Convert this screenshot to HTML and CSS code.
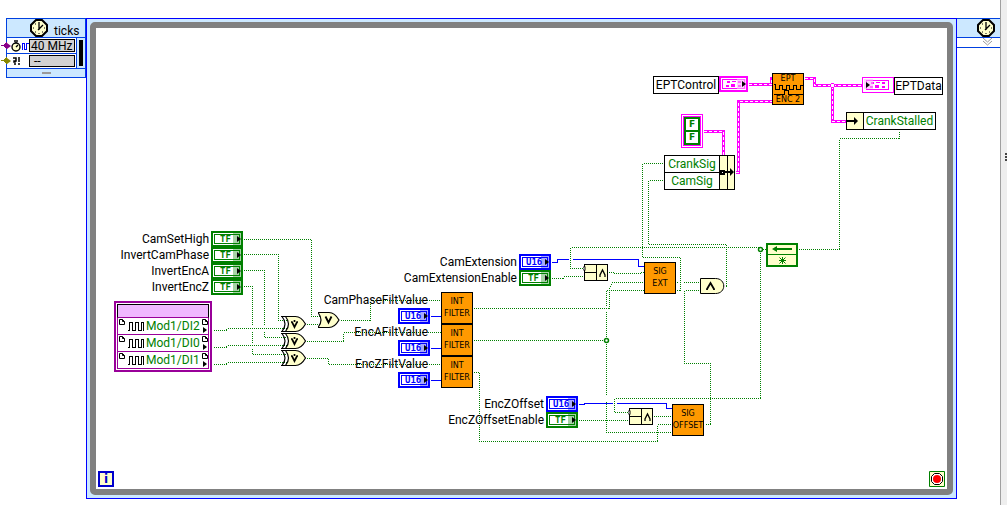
FILE: index.html
```html
<!DOCTYPE html>
<html lang="en">
<head>
<meta charset="utf-8">
<title>Block Diagram</title>
<link rel="stylesheet" href="styles.css">
</head>
<body>
<svg class="defs" width="0" height="0" aria-hidden="true">
  <defs>
    <symbol id="clock" viewBox="0 0 18 18">
      <path d="M6 1h6l5 5v6l-5 5H6l-5-5V6z" fill="#ffffcc" stroke="#000" stroke-width="2"/>
      <path d="M9 3v8M8 11l5-5" fill="none" stroke="#000" stroke-width="1.3"/>
      <path d="M3 9h1M14 9h1M9 14v1M5 5h1M5 13h1M12 13h1" fill="none" stroke="#000"/>
    </symbol>
    <symbol id="pulses" viewBox="0 0 17 9">
      <path transform="translate(.5 .5)" d="M0 8h2V0h3v8h3V0h3v8h3V0h2v8" fill="none" stroke="#000" shape-rendering="crispEdges"/>
    </symbol>
    <symbol id="page" viewBox="0 0 6 6">
      <path transform="translate(.5 .5)" d="M0 0h3l2 2v3H0zM3 0v2h2" fill="#fff" stroke="#000"/>
    </symbol>
    <symbol id="xor" viewBox="0 0 26 18">
      <path d="M4.500 1.500h10c5 0 8 4 10 7.500-2 3.500-5 7.500-10 7.500h-10c4-5 4-10 0-15z" fill="#ffffcc" stroke="#000" stroke-width="1.2"/>
      <path d="M0 1.500h5M0 16.500h5M1 1.500c4 5 4 10 0 15" fill="none" stroke="#000" stroke-width="1.2"/>
      <path d="M10 7l1 0 2.500 5 2.500-5 1 0M13.500 5v2" fill="none" stroke="#000" stroke-width="1.700"/>
    </symbol>
    <symbol id="or" viewBox="0 0 24 18">
      <path d="M0 1.500h11c5 0 8 4 10 7.500-2 3.500-5 7.500-10 7.500H0c4-5 4-10 0-15z" fill="#ffffcc" stroke="#000" stroke-width="1.2"/>
      <path d="M7.500 5.500l3 6 3-6" fill="none" stroke="#000" stroke-width="1.800"/>
    </symbol>
    <symbol id="compound" viewBox="0 0 26 18">
      <path transform="translate(.5 .5)" d="M1 0h23v16H1zM13 0v16M1 8h12" fill="#ffffcc" stroke="#000" shape-rendering="crispEdges"/>
      <path d="M17 13V11l2.500-5 2.500 5v2" fill="none" stroke="#000" stroke-width="1.300"/>
      <path d="M2 2.500c-3 0-3 4 0 4z" fill="#fff" stroke="#000"/>
    </symbol>
    <symbol id="cluster" viewBox="0 0 24 10">
      <path transform="translate(.5 .5)" d="M0 0h22v9H0z" fill="#fff" stroke="#f0f" shape-rendering="crispEdges"/>
      <path d="M5 2h3v2H5zM10 2h4v1h-4zM4 6h3v2H4zM9 5h4v3H9zM16 2h3v2h-3zM16 6h3v2h-3z" fill="#f0f" shape-rendering="crispEdges"/>
    </symbol>
  </defs>
</svg>

<main class="diagram">
  <div class="timed-loop">
    <section class="loop-input">
      <header class="node-head"><svg class="clock"><use href="#clock"/></svg><span>ticks</span></header>
      <div class="node-body">
        <div class="node-rows">
          <div class="node-row">
            <svg class="row-icon" viewBox="0 0 22 14">
              <path d="M0 4l4 3-4 3z" fill="#808"/>
              <circle cx="9" cy="8" r="4" fill="#ffffcc" stroke="#000" stroke-width="1.4"/>
              <path d="M7 2h4M9 8l2-2M9 3v1" stroke="#000" stroke-width="1.4"/>
              <path transform="translate(.5 .5)" d="M14 10h1V4h2v6h2V4h2" fill="none" stroke="#00f" shape-rendering="crispEdges"/>
            </svg>
            <span class="field">40 MHz</span>
          </div>
          <div class="node-row">
            <svg class="row-icon" viewBox="0 0 22 14">
              <path d="M0 4l4 3-4 3z" fill="#880"/>
              <path d="M6 4h3v3H7v1h1V7M7 10h2M12 3v5M11 10h2" fill="none" stroke="#000" stroke-width="1.500"/>
            </svg>
            <span class="field">--</span>
          </div>
        </div>
        <div class="priority"></div>
      </div>
      <footer class="grip"></footer>
    </section>

    <section class="loop-frame"><div class="loop-area"></div></section>

    <section class="loop-output">
      <header class="node-head"><svg class="clock"><use href="#clock"/></svg></header>
      <div class="expand"><svg width="11" height="8" viewBox="0 0 11 8"><path d="M1 0l4.500 4 4.500-4M1 3l4.500 4 4.500-4" fill="none" stroke="#999"/></svg></div>
    </section>
  </div>
  <aside class="side-pane"><span class="divider-grip"></span></aside>

  <svg class="wires" width="1000" height="500" aria-hidden="true">
    <g transform="translate(.5 .5)" fill="none" shape-rendering="crispEdges">
      <path d="M0 45h3l3-3v6l-3-3" stroke="#808" fill="#808"/>
      <path d="M0 60h3l3-3v6l-3-3" stroke="#880" fill="#880"/>
      <g class="boolean">
        <path d="M243 239H311V316H321"/>
        <path d="M243 254H278V320H286"/>
        <path d="M243 270H264V325M264 331V337H286"/>
        <path d="M243 286H252V325M252 331V342M252 348V354H286"/>
        <path d="M213 330H226V328H286"/>
        <path d="M213 347H226V345H286"/>
        <path d="M213 364H226V362H286"/>
        <path d="M306 324H320"/>
        <path d="M340 320H370V300H441"/>
        <path d="M306 341H343V332H441"/>
        <path d="M306 358H328V364H441"/>
        <path d="M473 308H609V287L612 282H645"/>
        <path d="M473 340H606M606 290V305M606 311V395M606 401V432H672M606 290H645"/>
        <path d="M473 372H479V441H657V424H672"/>
        <path d="M551 278H563V276H584"/>
        <path d="M582 268H570V247H760V398H614V412H627"/>
        <path d="M608 272H613V273H640V272H645"/>
        <path d="M676 290H680V257H642V163H664"/>
        <path d="M676 282H678M683 282H700"/>
        <path d="M725 286H726V244H648V180H664"/>
        <path d="M700 290H684V363H710V424H704"/>
        <path d="M760 249H766M798 249H839V138H899V130"/>
        <path d="M653 416H672M578 420H629"/>
      </g>
      <g stroke="#0000ff">
        <path d="M430 316H441M430 348H441M430 380H441"/>
        <path d="M551 262H557V259H568M572 259H638V266H645"/>
        <path d="M578 404H584V403H612M616 403H666V408H672"/>
      </g>
      <path class="cluster-edge" d="M748 84H771V78H774M804 78H814V85H862M832 85V121H846M703 131H723V156M735 172H738V101H772"/>
      <path class="cluster-core" d="M748 84H771V78H774M804 78H814V85H862M832 85V121H846M703 131H723V156M735 172H738V101H772"/>
      <circle cx="832" cy="85" r="2" fill="#fff" stroke="#f0f"/>
    </g>
    <g fill="#fff" stroke="#008000" stroke-width="1.5">
      <circle cx="606.5" cy="340.5" r="2"/><circle cx="760.5" cy="249.5" r="2"/>
    </g>
    <use href="#xor" x="281" y="315" width="26" height="18"/>
    <use href="#xor" x="281" y="332" width="26" height="18"/>
    <use href="#xor" x="281" y="349" width="26" height="18"/>
    <use href="#or" x="318" y="311" width="24" height="18"/>
    <use href="#compound" x="583" y="264" width="26" height="18"/>
    <use href="#compound" x="628" y="408" width="26" height="18"/>
    <path d="M700.500 278.500h15c11 0 11 15 0 15h-15z" fill="#ffffcc" stroke="#000"/>
    <path d="M707 290v-1l3.500-6 3.500 6v1" fill="none" stroke="#000" stroke-width="1.8"/>
    <g>
      <path d="M767 244h30v22h-30z" fill="#ffffcc" stroke="#008000" stroke-width="2"/>
      <path d="M767 254.500h30" stroke="#008000"/>
      <path d="M772 249l5-3v2h15v2h-15v2z" fill="#008000"/>
      <path d="M782.500 257v7M779 260.500h7M779.500 257.500l6 6M785.500 257.500l-6 6" stroke="#008000"/>
    </g>
  </svg>

  <div class="controls inputs">
    <div class="control"><span>CamSetHigh</span><b class="terminal bool">TF</b></div>
    <div class="control"><span>InvertCamPhase</span><b class="terminal bool">TF</b></div>
    <div class="control"><span>InvertEncA</span><b class="terminal bool">TF</b></div>
    <div class="control"><span>InvertEncZ</span><b class="terminal bool">TF</b></div>
  </div>

  <div class="io-node">
    <div class="io-head"></div>
    <div class="io-row"><svg class="page"><use href="#page"/></svg><svg class="pulses"><use href="#pulses"/></svg><span>Mod1/DI2</span><svg class="page"><use href="#page"/></svg></div>
    <div class="io-row"><svg class="page"><use href="#page"/></svg><svg class="pulses"><use href="#pulses"/></svg><span>Mod1/DI0</span><svg class="page"><use href="#page"/></svg></div>
    <div class="io-row"><svg class="page"><use href="#page"/></svg><svg class="pulses"><use href="#pulses"/></svg><span>Mod1/DI1</span><svg class="page"><use href="#page"/></svg></div>
  </div>

  <div class="controls filter-values">
    <div class="control stacked"><span>CamPhaseFiltValue</span><b class="terminal word">U16</b></div>
    <div class="control stacked"><span>EncAFiltValue</span><b class="terminal word">U16</b></div>
    <div class="control stacked"><span>EncZFiltValue</span><b class="terminal word">U16</b></div>
  </div>

  <div class="filters">
    <div class="subvi"><span>INT</span><span>FILTER</span></div>
    <div class="subvi"><span>INT</span><span>FILTER</span></div>
    <div class="subvi"><span>INT</span><span>FILTER</span></div>
  </div>

  <div class="controls extension">
    <div class="control"><span>CamExtension</span><b class="terminal word">U16</b></div>
    <div class="control"><span>CamExtensionEnable</span><b class="terminal bool">TF</b></div>
  </div>
  <div class="controls offset">
    <div class="control"><span>EncZOffset</span><b class="terminal word">U16</b></div>
    <div class="control"><span>EncZOffsetEnable</span><b class="terminal bool">TF</b></div>
  </div>

  <div class="subvi sig-ext"><span>SIG</span><span>EXT</span></div>
  <div class="subvi sig-offset"><span>SIG</span><span>OFFSET</span></div>

  <div class="ept-control"><span class="caption">EPTControl</span><span class="cluster-term out"><svg class="cluster"><use href="#cluster"/></svg></span></div>
  <div class="subvi ept"><span>EPT</span>
    <svg class="ept-wave" viewBox="0 0 30 11"><path transform="translate(.5 .5)" d="M0 0h2v5h4V1h3v4h4V1h3v4h4V1h3v4h4V1h3M0 10h11V6h4v4h15" fill="none" stroke="#000" shape-rendering="crispEdges"/></svg>
    <span>ENC 2</span></div>
  <div class="ept-data"><span class="cluster-term in"><svg class="cluster"><use href="#cluster"/></svg></span><span class="caption">EPTData</span></div>

  <div class="constant"><span>F</span><span>F</span></div>
  <div class="bundle">
    <div class="bundle-names"><span>CrankSig</span><span>CamSig</span></div>
    <svg class="bundle-bar" viewBox="0 0 14 33"><path d="M7.500 0v33" stroke="#000"/><path d="M0 14h5v5H0zM5 15h5v-3l4 4-4 4v-3H5z"/><path d="M2 16.500h1" stroke="#fff"/></svg>
  </div>
  <div class="unbundle">
    <svg class="unbundle-bar" viewBox="0 0 16 16"><path d="M0 7h7V4l4 4-4 4V9H0z"/></svg>
    <span>CrankStalled</span>
  </div>

  <div class="iteration">i</div>
  <svg class="stop" viewBox="0 0 16 16"><path d="M.5.500h15v15H.5z" fill="#ffffcc" stroke="#008000"/><path d="M5.500 2.500h5l3 3v5l-3 3h-5l-3-3v-5z" fill="#fff" stroke="#000"/><circle cx="8" cy="8" r="4" fill="red"/></svg>
</main>
</body>
</html>
```
FILE: styles.css
```css
* { box-sizing: border-box; }
body {
  margin: 0;
  background: #fff;
  color: #000;
  font: 12px/16px Roboto, "Noto Sans", sans-serif;
}
svg { display: block; flex: none; }
.defs { position: absolute; }
.diagram { position: relative; display: flex; min-height: 100vh; overflow: hidden; }
.timed-loop { flex: 1; display: flex; align-items: flex-start; padding: 18px 0 6px 6px; }

/* timed loop terminals */
.loop-input, .loop-output { border: 1px solid #0040e0; background: #cce8ff; }
.loop-input { width: 80px; height: 60px; display: flex; flex-direction: column; }
.node-head { display: flex; align-items: center; height: 18px; gap: 6px; padding-left: 23px; }
.node-head span { padding-top: 6px; }
.clock { width: 18px; height: 18px; }
.node-body { display: flex; border: solid #0040e0; border-width: 1px 0; }
.node-rows { flex: 1; background: #fff; border-right: 1px solid #0040e0; }
.node-row { display: flex; align-items: center; height: 15px; }
.node-row + .node-row { border-top: 1px solid #0040e0; }
.row-icon { width: 22px; height: 14px; }
.field {
  flex: 1;
  height: 13px;
  margin-right: 1px;
  padding-left: 1px;
  border: 1px solid #000;
  background: #d2d2d2;
  line-height: 12px;
  white-space: nowrap;
}
.node-row + .node-row .field { height: 12px; padding-left: 4px; line-height: 10px; }
.priority { width: 4px; margin: 2px; background: #000; }
.grip { width: 9px; height: 4px; margin: 3px auto; border: solid #999; border-width: 1px 0; }
.loop-frame {
  flex: 1;
  align-self: stretch;
  padding: 3px;
  border: 1px solid #0000ff;
  background: #cce8ff;
  display: flex;
}
.loop-area { flex: 1; border: 6px solid #808080; border-radius: 5px; background: #fff; }
.loop-output { width: 43px; border-width: 1px 0; }
.loop-output .node-head { padding-left: 20px; border-bottom: 1px solid #0040e0; height: 19px; }
.expand { height: 9px; padding-left: 25px; background: #fff; }
.side-pane {
  width: 7px;
  border-left: 1px solid #a0a0a0;
  background: #eee;
  padding: 153px 0 0 4px;
}
.divider-grip { display: block; height: 8px; border: dotted #444; border-width: 0 0 0 2px; }

/* wires */
.wires { position: absolute; left: 0; top: 0; }
.boolean { stroke: #008000; stroke-dasharray: 1 1; }
.cluster-edge { stroke: #ff00ff; stroke-width: 3; }
.cluster-core { stroke: #fff; stroke-dasharray: 3 2; }

/* front panel terminals */
.controls { position: absolute; width: 150px; }
.control { display: flex; justify-content: flex-end; align-items: center; gap: 2px; height: 16px; white-space: nowrap; }
.control.stacked { flex-direction: column; justify-content: flex-start; align-items: flex-end; gap: 0; height: 32px; }
.stacked > span { padding-right: 2px; }
.terminal {
  position: relative;
  flex: none;
  width: 32px;
  height: 16px;
  border: 2px solid;
  box-shadow: inset 0 0 0 1px #fff, inset 0 0 0 2px currentColor;
  background: #fff;
  font: bold 9px/12px "DejaVu Sans Mono", monospace;
  padding-left: 5px;
}
.bool { color: #008000; padding-left: 7px; }
.word { color: #0000ff; }
.terminal::before {
  content: "";
  position: absolute;
  right: 0;
  top: 0;
  width: 8px;
  height: 12px;
  background: currentColor;
  opacity: .35;
}
.terminal::after, .cluster-term::after, .io-row::after {
  content: "";
  position: absolute;
  right: 0;
  top: 3px;
  border: solid transparent;
  border-width: 3px 0 3px 4px;
  border-left-color: #000;
}
.inputs { left: 93px; top: 231px; }
.filter-values { left: 280px; top: 292px; }
.extension { left: 401px; top: 254px; }
.offset { left: 428px; top: 396px; }

/* FPGA I/O node */
.io-node {
  position: absolute;
  left: 114px;
  top: 301px;
  width: 98px;
  border: 2px solid #990099;
  padding: 1px;
  background: #fff;
  color: #008000;
}
.io-head { height: 14px; border: 1px solid #000; border-bottom-color: #990099; background: #f0b8ff; }
.io-row { position: relative; display: flex; align-items: center; gap: 2px; height: 17px; padding: 0 2px 0 1px; border: 1px solid #990099; border-top: 0; }
.io-row .page { width: 6px; height: 6px; align-self: flex-start; margin-top: 1px; }
.io-row .pulses { width: 17px; height: 9px; }
.io-row span { flex: 1; white-space: nowrap; text-align: center; }
.io-row::after { top: 9px; right: 1px; }

/* subVIs */
.filters { position: absolute; left: 441px; top: 292px; }
.subvi {
  width: 32px;
  height: 32px;
  border: 1px solid #000;
  background: #ff9900;
  display: flex;
  flex-direction: column;
  align-items: center;
  justify-content: center;
  font: 8px/12px "DejaVu Sans", sans-serif;
}
.sig-ext { position: absolute; left: 644px; top: 262px; }
.sig-offset { position: absolute; left: 672px; top: 404px; }
.ept { position: absolute; left: 772px; top: 73px; line-height: 10px; }
.ept-wave { width: 30px; height: 11px; }

/* cluster terminals */
.ept-control, .ept-data { position: absolute; display: flex; align-items: flex-start; }
.ept-control { left: 653px; top: 76px; }
.ept-data { left: 862px; top: 77px; }
.caption { height: 18px; border: 1px solid #000; background: #fff; text-align: center; }
.ept-control .caption { width: 66px; }
.ept-data .caption { width: 49px; }
.cluster-term { position: relative; height: 16px; border: 2px solid #ff00ff; background: #fff; padding: 1px; }
.cluster-term.out { width: 29px; }
.cluster-term.in { width: 32px; border-width: 1px; padding: 2px 3px; }
.cluster-term::before { content: ""; position: absolute; top: 1px; right: 0; width: 9px; height: 10px; background: #ffb0ff; opacity: .6; }
.cluster-term.in::before { right: auto; left: 1px; }
.cluster-term.in::after { right: auto; left: 3px; top: 4px; }
.cluster { width: 24px; height: 10px; }

.constant {
  position: absolute;
  left: 681px;
  top: 114px;
  width: 22px;
  height: 34px;
  border: 1px solid #ff00ff;
  box-shadow: inset 0 0 0 1px #fff, inset 0 0 0 2px #ff00ff;
  padding: 4px;
  background: #008000;
  display: grid;
  gap: 2px;
  color: #008000;
  font: bold 9px/11px "DejaVu Sans", sans-serif;
  text-align: center;
}
.constant span { background: #fff; }
.bundle { position: absolute; left: 664px; top: 155px; display: flex; border: 1px solid #000; background: #ffffcc; }
.bundle-names { width: 55px; border-right: 1px solid #000; background: #fff; color: #008000; text-align: center; }
.bundle-names span { display: block; }
.bundle-names span + span { border-top: 1px solid #000; }
.bundle-bar { width: 14px; height: 33px; }
.unbundle { position: absolute; left: 846px; top: 112px; display: flex; border: 1px solid #000; background: #ffffcc; }
.unbundle-bar { width: 16px; height: 16px; }
.unbundle span { width: 72px; border-left: 1px solid #000; background: #fff; color: #008000; text-align: center; }

.iteration {
  position: absolute;
  left: 98px;
  top: 471px;
  width: 16px;
  height: 16px;
  border: 2px solid #0000cc;
  background: #ffffcc;
  color: #0000cc;
  font: bold 12px/12px "DejaVu Sans", sans-serif;
  text-align: center;
}
.stop { position: absolute; left: 929px; top: 471px; width: 16px; height: 16px; }
```
